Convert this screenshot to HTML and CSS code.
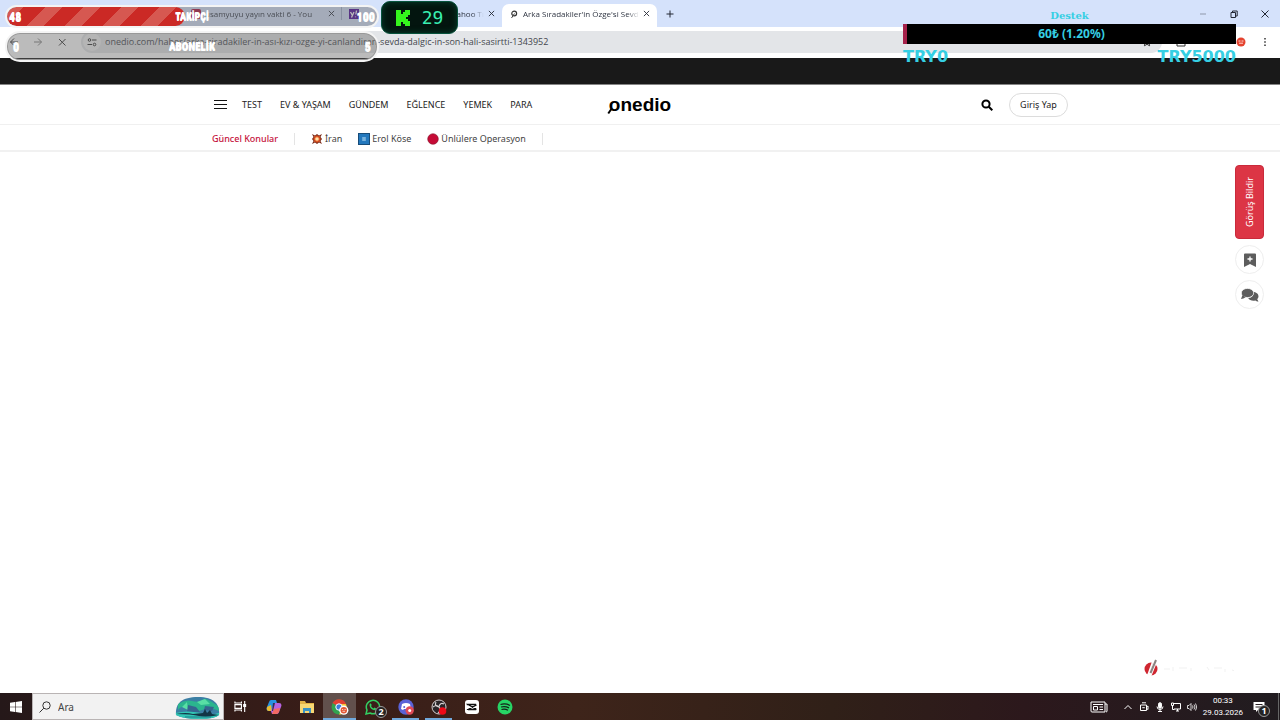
FILE: index.html
```html
<!DOCTYPE html>
<html lang="tr">
<head>
    <meta charset="UTF-8">
    <title>Onedio</title>
    <link rel="stylesheet" href="styles.css">
</head>
<body>
    <!-- browser -->
    <div class="browser">
        <div class="tabs">
            <div class="tab tab-first">
                <svg class="favicon" viewBox="0 0 10 10"><rect width="10" height="10" rx="2" fill="#b0123f"/></svg>
                <span class="tab-title">usamyuyu yayın vakti 6 - You</span>
                <button class="tab-close" aria-label="Kapat"><svg viewBox="0 0 8 8"><path d="M1 1l6 6M7 1l-6 6"/></svg></button>
            </div>
            <div class="tab tab-second">
                <svg class="favicon" viewBox="0 0 10 10"><rect width="10" height="10" fill="#4b0a9c"/><path d="M1.500 3l1.700 3M5 3l-2.500 5.500M7.500 1.500l-.7 4M6.500 7.500v.8" stroke="#fff" stroke-width="1.300" fill="none"/></svg>
                <span class="tab-title tab-title-end">Yahoo Tı</span>
                <button class="tab-close" aria-label="Kapat"><svg viewBox="0 0 8 8"><path d="M1 1l6 6M7 1l-6 6"/></svg></button>
            </div>
            <div class="tab tab-active">
                <svg class="favicon" viewBox="0 0 10 10"><circle cx="5.200" cy="4.500" r="2.400" fill="none" stroke="#333" stroke-width="1.200"/><path d="M2.500 9l3-4.500" stroke="#444"/></svg>
                <span class="tab-title">Arka Sıradakiler'in Özge'si Sevd</span>
                <button class="tab-close" aria-label="Kapat"><svg viewBox="0 0 8 8"><path d="M1 1l6 6M7 1l-6 6"/></svg></button>
            </div>
            <button class="new-tab" aria-label="Yeni sekme"><svg viewBox="0 0 8 8"><path d="M4 0.500v7M0.500 4h7"/></svg></button>
            <div class="window-buttons">
                <button aria-label="Küçült"><svg viewBox="0 0 8 8"><path d="M1 4h6" stroke="#8f98aa"/></svg></button>
                <button aria-label="Geri yükle"><svg viewBox="0 0 8 8"><path d="M1 2.500h4.500v5H1zM2.500 2.500v-1.500h4.700v5H5.500"/></svg></button>
                <button aria-label="Pencereyi kapat"><svg viewBox="0 0 8 8"><path d="M0.500 0.500l7 7M7.500 0.500l-7 7"/></svg></button>
            </div>
        </div>
        <div class="toolbar">
            <button class="tool" aria-label="Geri"><svg viewBox="0 0 10 10"><path d="M9 5H1.500M5 1.500L1.500 5 5 8.500"/></svg></button>
            <button class="tool tool-dim" aria-label="İleri"><svg viewBox="0 0 10 10"><path d="M1 5h7.500M5 1.500L8.500 5 5 8.500"/></svg></button>
            <button class="tool" aria-label="Durdur"><svg viewBox="0 0 10 10"><path d="M2 2l6.500 6.500M8.500 2L2 8.500"/></svg></button>
            <div class="address">
                <span class="site-info"><svg viewBox="0 0 10 10"><circle cx="2.500" cy="3" r="1.300"/><path d="M5 3h4.500M0.500 7.500H5"/><circle cx="7.500" cy="7.500" r="1.300"/></svg></span>
                <input type="text" aria-label="Adres" value="onedio.com/haber/arka-siradakiler-in-ası-kızı-ozge-yi-canlandiran-sevda-dalgic-in-son-hali-sasirtti-1343952">
                <svg class="star" viewBox="0 0 10 10"><path d="M5 1l1.200 2.600 2.800.3-2 2 .6 2.900L5 7.300 2.400 8.800 3 5.900l-2-2 2.800-.3z"/></svg>
            </div>
            <div class="extensions">
                <svg viewBox="0 0 10 10"><path d="M1 2h8v7H1z"/></svg>
                <svg class="avatar" viewBox="0 0 10 10"><circle cx="5" cy="5" r="4.500" fill="#e4432f" stroke="none"/><path d="M2.500 4h2M5.500 4h2M3 6.200h4" stroke="#ffd7cf"/></svg>
                <svg viewBox="0 0 10 10"><path d="M5 1v1.500M5 4.300v1.500M5 7.600v1.500" stroke-width="1.500"/></svg>
            </div>
        </div>
    </div>

    <div class="ad-band"></div>

    <!-- site -->
    <header class="site-header">
        <div class="container header-row">
            <nav class="main-nav">
                <button class="burger" aria-label="Menü"><i></i><i></i><i></i></button>
                <a href="#">TEST</a>
                <a href="#">EV &amp; YAŞAM</a>
                <a href="#">GÜNDEM</a>
                <a href="#">EĞLENCE</a>
                <a href="#">YEMEK</a>
                <a href="#">PARA</a>
            </nav>
            <a href="#" class="logo">onedio</a>
            <div class="account">
                <button class="search-button" aria-label="Ara"><svg viewBox="0 0 12 12"><circle cx="5" cy="5" r="3.600"/><path d="M7.800 7.800l3.500 3.500"/></svg></button>
                <button class="login">Giriş Yap</button>
            </div>
        </div>
    </header>
    <div class="topics">
        <div class="container topics-row">
            <strong>Güncel Konular</strong>
            <div class="topic-list">
                <a href="#"><svg viewBox="0 0 12 12"><path d="M1 1l3 1.500L6 1l2 1.500L11 1l-1.500 3L11 6 9.500 8l1.500 3-3-1.500L6 11 4 9.500 1 11l1.500-3L1 6l1.500-2z" fill="#7c2a17"/><path d="M6 2l1 1.500 2-.5-.5 2L10 6 8.500 7l.5 2-2-.5L6 10 5 8.500 3 9l.5-2L2 6l1.500-1L3 3l2 .5z" fill="#e85b27"/><circle cx="6" cy="6" r="1.800" fill="#ffe3a8"/></svg>İran</a>
                <a href="#"><svg viewBox="0 0 12 12"><rect x=".5" y=".5" width="11" height="11" fill="#2378bd" stroke="#174c79"/><path d="M5 4v4M7 4v4M4.500 5h3M4.500 7h3" stroke="#b9dcf4" stroke-width=".7"/></svg>Erol Köse</a>
                <a href="#"><svg viewBox="0 0 12 12"><circle cx="6" cy="6" r="5.300" fill="#c50b36" stroke="#86152d" stroke-width=".6"/></svg>Ünlülere Operasyon</a>
            </div>
        </div>
    </div>
    <main class="content">
        <aside class="side-tools">
            <button class="feedback">Görüş Bildir</button>
            <button class="round" aria-label="Kaydet"><svg viewBox="0 0 14 14"><path d="M1 1.500Q1 0.500 2 0.500h10q1 0 1 1V14L7 11l-6 3z" fill="#5d5d5d"/><path d="M7 3.500v5M4.500 6h5" stroke="#fff" stroke-width="1.300"/></svg></button>
            <button class="round" aria-label="Yorumlar"><svg class="comments" viewBox="0 0 18 14"><path d="M12 4c3 0 5.500 1.800 5.500 4.300 0 1.200-.6 2.200-1.300 2.900l1.300 2.300c-1.500 0-2.600-.5-3.300-1-3 .6-6-.4-7-2.600 3.600 0 6-2.500 4.800-5.900z" fill="#5d5d5d"/><ellipse cx="6.500" cy="5" rx="6.200" ry="4.600" fill="#5d5d5d" stroke="#fff" stroke-width=".7"/><path d="M1.500 7L0 11q2.500 0 4.500-1.800z" fill="#5d5d5d"/></svg></button>
        </aside>
        <svg class="watermark" viewBox="0 0 90 18">
            <circle cx="7" cy="10" r="6.500" fill="#cf2630"/>
            <path d="M3.500 17L9 2" stroke="#fff" stroke-width="1.500"/>
            <path d="M5.500 17L12 1" stroke="#fff" stroke-width="3.500"/>
            <path d="M6.500 14L12 1" stroke="#8b8481" stroke-width="2"/>
            <path d="M20 10h6m3-2v4m6-3h8m4 0v3m16-4l2 3m5-2h8m3 1v3m7-2l3 1" stroke="#f1f1f1" fill="none"/>
        </svg>
    </main>

    <!-- windows taskbar -->
    <footer class="taskbar">
        <button class="start" aria-label="Başlat"><svg viewBox="0 0 12 12" fill="#fff"><path d="M0 1.800L5 1v4.700H0zM5.600.9L12 0v5.700H5.600zM0 6.300h5V11l-5-.8zM5.600 6.300H12V12l-6.400-.9z"/></svg></button>
        <label class="search">
            <svg class="lens" viewBox="0 0 12 12"><circle cx="7.500" cy="4.500" r="3.700"/><path d="M4.800 7.200L.5 11.500"/></svg>
            <input type="text" placeholder="Ara">
            <svg class="aurora" viewBox="0 0 46 24">
                <defs><clipPath id="sky"><path d="M1 20C0 8 7 2 23 2s22 7 21 18q-4 4-20 4T1 20z"/></clipPath></defs>
                <g clip-path="url(#sky)">
                    <path fill="#3b7fa4" d="M0 0h46v24H0z"/>
                    <path d="M3 9q7-5 14-3t10-1 10 2 7 4v5q-9-5-17-1T13 14 3 15z" fill="#2bb58e"/>
                    <path d="M7 12l5-5 1 8zM22 7l8-3 5 5-9 1z" fill="#58dfa5"/>
                    <path d="M13 10l8 2 4 5H12zM30 11l9 1-2 4-8-1z" fill="#35658f"/>
                    <path d="M0 18q13-3 25 0t21-1v7H0z" fill="#32c6b4"/>
                    <path d="M1 19q10-2 17 0l10-1 2-4 2 4 3-3 2 4 7 1q-13 3-20 1T1 19z" fill="#123546"/>
                    <path d="M10 22h26" stroke="#207b88"/>
                </g>
            </svg>
        </label>
        <div class="apps">
            <button aria-label="Görev görünümü"><svg viewBox="0 0 14 14" fill="none" stroke="#fff" stroke-width="1.200"><path d="M1 1.500v1.800h7V1.500M1 5h7v4H1zM1 12.500v-1.800h7v1.800M11.500 1v12"/><path d="M10.500 5h2v2h-2z" fill="#fff"/></svg></button>
            <button aria-label="Copilot"><svg viewBox="0 0 16 16"><path d="M5 1h5l1 3-3 8H3Q-.5 12 1 8l2-5q.6-2 2-2z" fill="#2893e3"/><path d="M1 8l4-2 1 6H3Q0 12 1 8z" fill="#e9bb31"/><path d="M11 15H6l-1-3 3-8h5q3.500 0 2 4l-2 5q-.6 2-2 2z" fill="#b763df"/><path d="M8 10l6-1-1 4q-1 2-3 2H6z" fill="#f36a62"/><path d="M7 4h2L7 12H6z" fill="#303155"/></svg></button>
            <button aria-label="Dosya Gezgini"><svg viewBox="0 0 16 16"><path d="M1 2h5l1 2h8v10H1z" fill="#e3b347"/><path d="M1 5h14v9H1z" fill="#f7d774"/><path d="M4 14V9h8v5H10v-2H6v2z" fill="#3a92c4"/></svg></button>
            <button class="current" aria-label="Chrome"><svg viewBox="0 0 18 16"><circle cx="8" cy="8" r="7.500" fill="#32a350"/><path d="M8 8L1.500 4A7.500 7.500 0 0 1 15 5H8z" fill="#e34033"/><path d="M8 5h7A7.500 7.500 0 0 1 8 15.500L11 9z" fill="#f5c532"/><circle cx="8" cy="8" r="3.200" fill="#3d7ddc" stroke="#fff"/><circle cx="12.800" cy="11.200" r="4.600" fill="#fff"/><circle cx="12.800" cy="11.200" r="3.200" fill="#e35936"/><path d="M11 10.500h1.200M13.500 10.500h1.200M11.500 12.300h2.600" stroke="#fff" stroke-width=".7"/></svg></button>
            <button class="whatsapp" aria-label="WhatsApp"><svg viewBox="0 0 16 16"><path d="M1 15l1-4A6.700 6.700 0 1 1 5 14z" fill="none" stroke="#33cf62" stroke-width="1.500"/><path d="M5.500 4.300l1.300 1.800-.8 1q.8 1.600 2.500 2.300l1-1 1.800 1q-.2 1.800-2 1.800Q5 10.500 4.500 6q0-1 1-1.700z" fill="#33cf62"/></svg><b>2</b></button>
            <button class="open" aria-label="Discord"><svg viewBox="0 0 16 16"><circle cx="8" cy="8" r="7.700" fill="#5a62d7"/><path d="M4 5q4-2 8 0l1 5-2 1-1-1H6l-1 1-2-1z" fill="#fff"/><circle cx="6.200" cy="8" r="1" fill="#5a62d7"/><circle cx="11.700" cy="11.500" r="4.200" fill="#df4b57"/><circle cx="11.700" cy="11.500" r="1.500" fill="#fff"/></svg></button>
            <button class="open" aria-label="OBS"><svg viewBox="0 0 16 16"><circle cx="8" cy="8" r="7" fill="#292528" stroke="#d5d0d1"/><path d="M8 8Q3 7 5 3M8 8q1-5 5-3M8 8q3 3-1 6M2 8q4-3 6 0" fill="none" stroke="#d5d0d1" stroke-width="1.200"/><circle cx="11.500" cy="12" r="3.800" fill="#ed0a18"/></svg></button>
            <button aria-label="CapCut"><svg viewBox="0 0 16 16"><rect x="1" y="1" width="14" height="14" rx="3" fill="#fff"/><path d="M12.500 6L4 10.500h7.500V9M12.500 10.500L4 5.500h7.500V7M3.500 5v1.200M3.500 10v1" fill="none" stroke="#111" stroke-width="1.300"/></svg></button>
            <button aria-label="Spotify"><svg viewBox="0 0 16 16"><circle cx="8" cy="8" r="7.500" fill="#27d465"/><path d="M3.500 5.500q5-1.500 9.500 1M4 8q4-1.200 8 .8M4.500 10.500q3.500-1 6.500.7" fill="none" stroke="#142219" stroke-width="1.300"/></svg></button>
        </div>
        <div class="tray">
            <svg class="news" viewBox="0 0 18 12"><path d="M1 1h14v10H2q-1 0-1-1zM15 3h2v7q0 1-1 1M3 3.500h10M3.500 5.500h4v3.500h-4zM9.500 6H13M9.500 8.500H13"/></svg>
            <svg viewBox="0 0 10 10"><path d="M1.500 7L5 3.500 8.500 7"/></svg>
            <svg viewBox="0 0 10 10"><path d="M3 .8h4M1.500 3h6v5.500h-6zM7.500 5l1.500-1v3.500l-1.500-1M3.300 5.700h2.500"/></svg>
            <svg viewBox="0 0 10 10"><rect x="3.500" y=".7" width="3" height="5.500" rx="1.500" fill="#fff"/><path d="M2 4.500q0 3 3 3t3-3M5 7.500v2M3 9.500h4"/></svg>
            <svg viewBox="0 0 10 10"><path d="M3 1.500h6.500v5.500H3M5 9h3M6.500 7v2M.5 1h2v2.500h-2zM1.500 3.500v4h2"/></svg>
            <svg viewBox="0 0 10 10"><path d="M.5 3.500h1.500L4 1.500v7L2 6.500H.5zM5.500 3.500q1 1.500 0 3M7 2.500q2 2.500 0 5M8.500 1.500q2.500 3.500 0 7" stroke-width=".8"/></svg>
            <div class="clock">
                <span>00:33</span>
                <span>29.03.2026</span>
            </div>
            <button class="notifications" aria-label="Bildirimler"><svg viewBox="0 0 12 12"><path d="M.5 1h11v8H5l-2 2V9H.5z" fill="#fff"/><path d="M2.500 3.500h7M2.500 6h7" stroke="#292023"/></svg><b>1</b></button>
        </div>
    </footer>

    <!-- stream overlays -->
    <div class="goals">
        <div class="goal goal-followers">
            <span class="goal-fill"></span>
            <span>48</span><span>TAKİPÇİ</span><span>100</span>
        </div>
        <div class="goal goal-subs">
            <span>0</span><span>ABONELİK</span><span>5</span>
        </div>
    </div>
    <div class="viewers">
        <svg viewBox="0 0 14 16"><path d="M0 0h5v4h2V2h2V0h5v5h-2v2h-2v2h2v2h2v5H9v-2H7v-2H5v4H0z" fill="#35f51d"/></svg>
        <span>29</span>
    </div>
    <div class="donation">
        <div class="donation-title">Destek</div>
        <div class="donation-bar">60₺ (1.20%)</div>
        <div class="donation-range"><span>TRY0</span><span>TRY5000</span></div>
    </div>
</body>
</html>
```
FILE: styles.css
```css
* {
    box-sizing: border-box;
}

body {
    margin: 0;
    min-height: 100vh;
    display: flex;
    flex-direction: column;
    position: relative;
    background: #fff;
    color: #222;
    font-family: "Noto Sans", sans-serif;
    font-size: 9px;
}

button {
    border: 0;
    padding: 0;
    background: none;
    font: inherit;
    color: inherit;
    cursor: pointer;
}

a {
    color: inherit;
    text-decoration: none;
}

svg {
    display: block;
    flex: none;
}

/* browser */
.tabs {
    height: 27px;
    display: flex;
    align-items: center;
    padding-left: 184px;
    background: #d5e2fb;
}

.tab {
    display: flex;
    align-items: center;
    gap: 4px;
    height: 27px;
    padding: 0 7px;
    font-family: "Open Sans", sans-serif;
    font-size: 8px;
    color: #303643;
}

.tab-first {
    width: 158px;
    background: linear-gradient(#a5b3d0, #a5b3d0) right / 1px 13px no-repeat;
}

.tab-second {
    width: 160px;
}

.tab-active {
    width: 155px;
    height: 23px;
    align-self: flex-end;
    padding-bottom: 4px;
    background: #fff;
    border-radius: 7px 7px 0 0;
}

.tab .favicon {
    width: 10px;
    height: 10px;
}

.tab-title {
    flex: 1;
    white-space: nowrap;
    mask-image: linear-gradient(to right, #000 90%, transparent);
}

.tab-title-end {
    text-align: right;
}

.tab-close svg,
.new-tab svg,
.window-buttons svg {
    width: 8px;
    height: 8px;
    fill: none;
    stroke: #222733;
}

.tab-close svg {
    width: 7px;
    height: 7px;
}

.new-tab {
    margin-left: 9px;
}

.window-buttons {
    display: flex;
    gap: 23px;
    margin-left: auto;
    padding-right: 11px;
}

.toolbar {
    height: 31px;
    display: flex;
    align-items: center;
    gap: 14px;
    padding: 0 10px 2px 9px;
    background: #fff;
}

.tool svg,
.extensions svg,
.star,
.site-info svg {
    width: 10px;
    height: 10px;
    fill: none;
    stroke: #333;
}

.tool-dim {
    opacity: 0.6;
}

.address {
    flex: 1;
    height: 22px;
    display: flex;
    align-items: center;
    gap: 4px;
    padding: 0 10px 0 2px;
    border-radius: 11px;
    background: #e3e5e8;
}

.site-info {
    display: grid;
    place-items: center;
    width: 18px;
    height: 18px;
    border-radius: 50%;
    background: #f4f4f4;
}

.address input {
    flex: 1;
    border: 0;
    padding: 0;
    background: none;
    font-family: "Open Sans", sans-serif;
    font-size: 9px;
    color: #43474d;
}

.extensions {
    display: flex;
    gap: 14px;
}

.extensions svg:first-child {
    margin-right: 36px;
}

.ad-band {
    height: 27px;
    background: #191919;
    border-bottom: 1px solid #858585;
}

/* site */
.container {
    width: 100%;
    max-width: 856px;
    margin: 0 auto;
}

.site-header {
    border-bottom: 1px solid #f0f0f0;
}

.header-row {
    height: 39px;
    display: grid;
    grid-template-columns: 1fr auto 1fr;
    align-items: center;
}

.main-nav {
    display: flex;
    align-items: center;
    gap: 18px;
    padding-left: 2px;
    white-space: nowrap;
}

.burger {
    display: grid;
    gap: 3px;
    width: 13px;
    margin-right: -3px;
}

.burger i {
    height: 1px;
    background: #111;
}

.logo {
    position: relative;
    font-family: "Liberation Sans", sans-serif;
    font-size: 19px;
    font-weight: bold;
    line-height: 21px;
    color: #000;
}

/* the tail of the first letter */
.logo::before {
    content: "";
    position: absolute;
    left: 0;
    bottom: 1px;
    width: 2px;
    height: 6px;
    background: #000;
    transform: rotate(35deg);
}

.account {
    display: flex;
    justify-content: flex-end;
    align-items: center;
    gap: 16px;
}

.search-button svg {
    width: 12px;
    height: 12px;
    fill: none;
    stroke: #000;
    stroke-width: 2;
}

.login {
    width: 59px;
    height: 24px;
    border: 1px solid #dcdcdc;
    border-radius: 12px;
}

.topics {
    border-bottom: 2px solid #f1f1f1;
}

.topics-row {
    height: 25px;
    display: flex;
    align-items: center;
    gap: 16px;
    padding-top: 2px;
}

.topics strong {
    font-weight: 500;
    color: #c5123c;
}

.topic-list {
    display: flex;
    gap: 16px;
    padding: 0 16px;
    border: solid #e4e4e4;
    border-width: 0 1px;
    line-height: 12px;
    color: #444;
}

.topic-list a {
    display: flex;
    align-items: center;
    gap: 2px;
}

.topic-list svg {
    width: 12px;
    height: 12px;
}

.content {
    flex: 1;
    display: flex;
    flex-direction: column;
    justify-content: space-between;
    align-items: flex-end;
    padding: 13px 16px 16px;
}

.side-tools {
    display: flex;
    flex-direction: column;
    gap: 6px;
}

.feedback {
    width: 29px;
    height: 74px;
    border: 1px solid #c92a3b;
    border-radius: 4px;
    background: #dc3545;
    color: #fff;
    writing-mode: sideways-lr;
    text-align: center;
}

.round {
    width: 29px;
    height: 29px;
    display: grid;
    place-items: center;
    border: 1px solid #eee;
    border-radius: 50%;
}

.round svg {
    width: 14px;
    height: 14px;
}

.round .comments {
    width: 18px;
    height: 14px;
}

.watermark {
    width: 90px;
    height: 18px;
    margin-right: 30px;
}

/* taskbar */
.taskbar {
    height: 27px;
    display: flex;
    background: linear-gradient(to right, #251819, #391d18 25%, #3e241a 45%, #302018 65%, #2c181c 80%, #211c20);
    color: #fff;
}

.start {
    width: 32px;
    display: grid;
    place-items: center;
}

.start svg {
    width: 12px;
    height: 12px;
}

.search {
    width: 192px;
    display: flex;
    align-items: center;
    gap: 7px;
    padding: 0 2px 0 6px;
    background: #f2f2f2;
    border: 1px solid #b9b4b4;
}

.lens {
    width: 12px;
    height: 12px;
    fill: none;
    stroke: #333;
}

.search input {
    flex: 1;
    min-width: 0;
    border: 0;
    padding: 0;
    background: none;
    font-family: "Noto Sans", sans-serif;
    font-size: 10px;
}

.search input::placeholder {
    color: #444;
}

.aurora {
    width: 46px;
    height: 24px;
}

.apps {
    display: flex;
}

.apps button {
    position: relative;
    width: 33px;
    display: grid;
    place-items: center;
    border-bottom: 2px solid transparent;
    border-top: 2px solid transparent;
}

.apps svg {
    width: 16px;
    height: 16px;
}

.apps button:first-child svg {
    width: 13px;
    height: 13px;
}

.apps .open {
    background: linear-gradient(#71a9dc, #71a9dc) center bottom / 27px 2px no-repeat border-box;
}

.apps .current {
    background: #62504c;
    border-top-color: #62504c;
    border-bottom-color: #71a9dc;
}

.apps .current svg {
    width: 18px;
}

.apps b,
.notifications b {
    position: absolute;
    right: 2px;
    bottom: 0;
    width: 12px;
    height: 12px;
    border: 1px solid #999;
    border-radius: 50%;
    background: #252323;
    font-size: 9px;
    line-height: 10px;
    text-align: center;
}

.tray {
    display: flex;
    align-items: center;
    gap: 6px;
    margin-left: auto;
    padding-right: 1px;
}

.tray > svg {
    width: 10px;
    height: 10px;
    fill: none;
    stroke: #fff;
}

.tray .news {
    width: 18px;
    height: 12px;
    margin-right: 9px;
}

.clock {
    display: grid;
    text-align: center;
    font-family: Roboto, sans-serif;
    font-size: 8px;
    line-height: 12px;
}

.notifications {
    position: relative;
    width: 30px;
    height: 27px;
    padding-left: 4px;
    border-right: 1px solid #666;
}

.notifications svg {
    width: 12px;
    height: 12px;
}

.notifications b {
    right: 8px;
    bottom: 3px;
}

/* stream overlays */
.goals {
    position: absolute;
    top: 5px;
    left: 5px;
    width: 374px;
    display: grid;
    gap: 3px;
    font-family: "Roboto Condensed", Roboto, sans-serif;
    font-weight: 900;
    font-size: 12px;
    color: #fff;
    text-shadow: 0 1px #fff;
}

.goal {
    position: relative;
    display: grid;
    grid-template-columns: 1fr auto 1fr;
    align-items: center;
    height: 23px;
    padding: 0 2px;
    border: 2px solid #f4f4f4;
    border-radius: 15px;
    background: rgba(105, 105, 105, 0.45);
    overflow: hidden;
}

.goal span {
    position: relative;
}

.goal span:nth-last-child(2) {
    font-size: 10px;
}

.goal span:last-child {
    text-align: right;
}

.goal .goal-fill {
    position: absolute;
    inset: 0 auto 0 0;
    width: 48%;
    border-radius: 12px;
    background: repeating-linear-gradient(135deg, #d65851 0 12px, #cb2925 12px 27px);
}

.goal-subs {
    height: 31px;
    padding: 0 6px;
    box-shadow: inset 0 0 0 1px #999;
}

.goal-subs span:nth-last-child(2) {
    font-size: 11px;
}

.viewers {
    position: absolute;
    top: 1px;
    left: 381px;
    width: 77px;
    height: 33px;
    display: flex;
    align-items: center;
    justify-content: center;
    gap: 12px;
    border: 1px solid #07533c;
    border-radius: 9px;
    background: #03150f;
    box-shadow: inset 0 0 6px #05412d;
    font-family: "DejaVu Sans Mono", monospace;
    font-size: 18px;
    color: #39efb0;
}

.viewers svg {
    width: 14px;
    height: 16px;
}

.donation {
    position: absolute;
    top: 8px;
    right: 44px;
    width: 333px;
    font-family: "DejaVu Sans", sans-serif;
    font-weight: bold;
    color: #36cfe3;
}

.donation-title {
    font-family: "DejaVu Serif", serif;
    font-size: 10px;
    line-height: 16px;
    text-align: center;
}

.donation-bar {
    height: 20px;
    border-left: 4px solid #a5224b;
    background: #000;
    font-family: "Noto Sans", sans-serif;
    font-size: 12px;
    line-height: 20px;
    text-align: center;
}

.donation-range {
    display: flex;
    justify-content: space-between;
    font-size: 16px;
    line-height: 26px;
}
```
